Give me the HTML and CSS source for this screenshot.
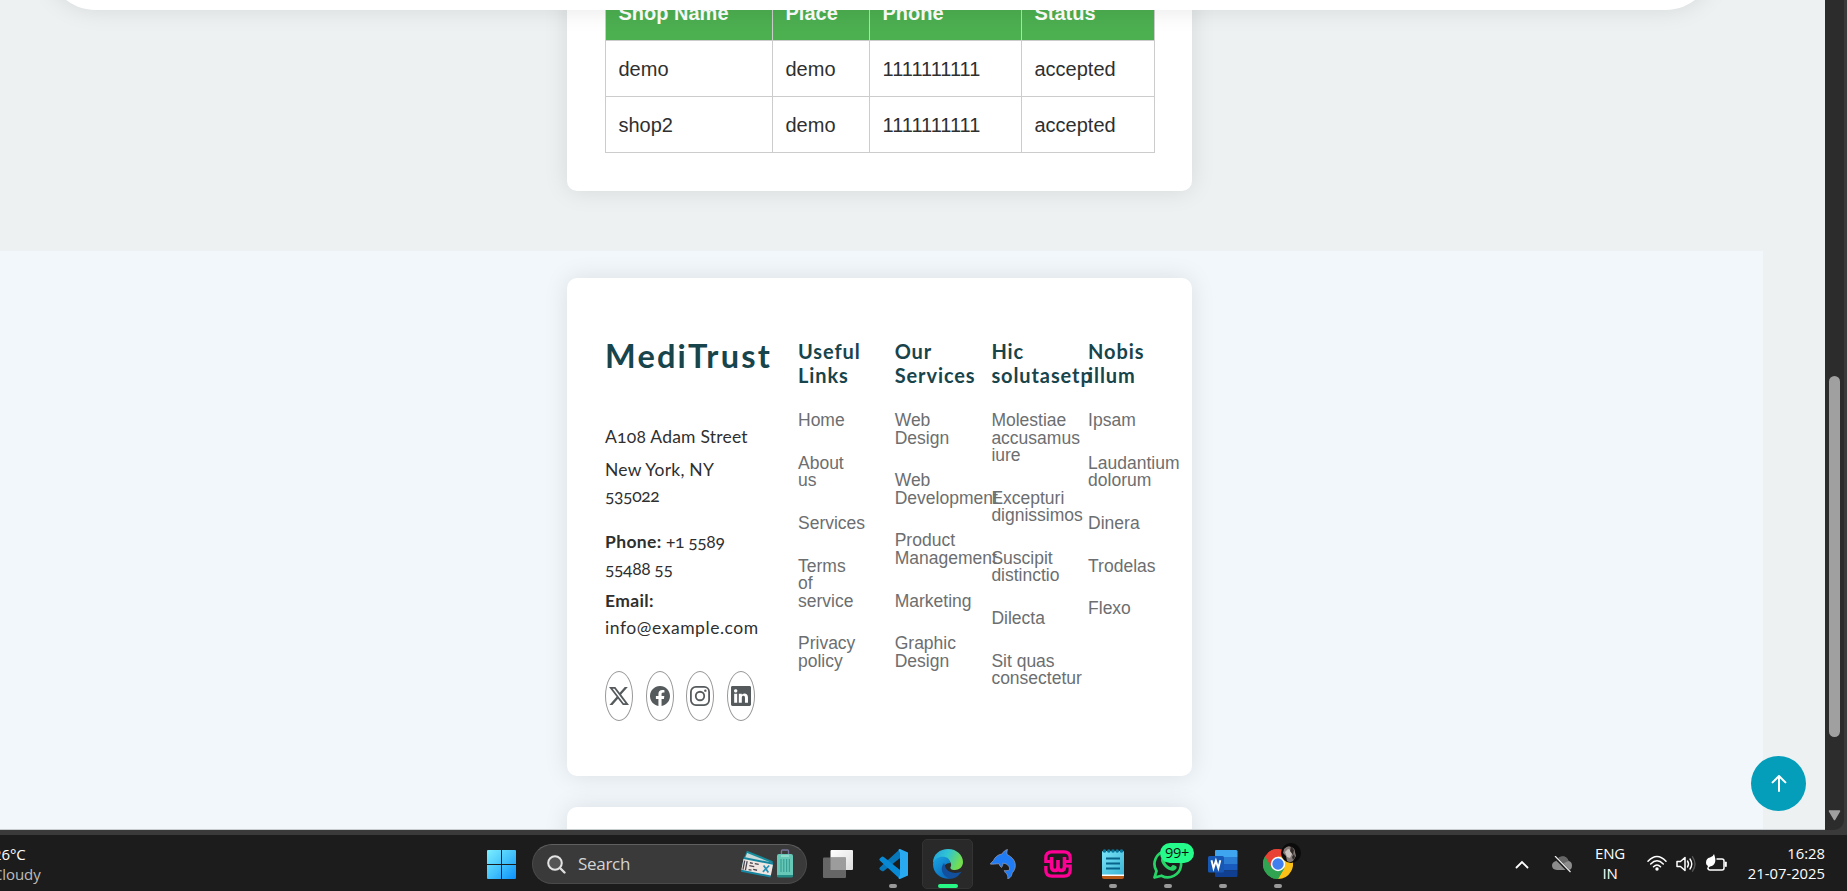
FILE: index.html
```html
<!DOCTYPE html>
<html lang="en">
<head>
<meta charset="utf-8">
<title>MediTrust</title>
<link rel="stylesheet" href="styles.css">
</head>
<body>
<div class="browser">
  <main class="page">
    <header class="navbar"></header>
    <section class="shops">
      <div class="card">
        <table class="shop-table">
          <thead><tr><th class="c-name">Shop Name</th><th class="c-place">Place</th><th class="c-phone">Phone</th><th class="c-status">Status</th></tr></thead>
          <tbody>
            <tr><td>demo</td><td>demo</td><td>1111111111</td><td>accepted</td></tr>
            <tr><td>shop2</td><td>demo</td><td>1111111111</td><td>accepted</td></tr>
          </tbody>
        </table>
      </div>
    </section>
    <footer class="footer">
      <div class="card footer-card">
        <div class="about">
          <div class="sitename">MediTrust</div>
          <div class="contact">
            <p class="street">A108 Adam Street</p>
            <p class="city">New York, NY<br><span class="digits">535022</span></p>
            <p class="phone"><strong>Phone:</strong> <span class="digits">+1 5589<br>55488 55</span></p>
            <p><strong>Email:</strong><br><span class="mail">info@example.com</span></p>
          </div>
          <div class="social">
            <a><svg viewBox="0 0 16 16"><path d="M12.6.75h2.454l-5.36 6.142L16 15.25h-4.937l-3.867-5.07-4.425 5.07H.316l5.733-6.57L0 .75h5.063l3.495 4.633L12.601.75Zm-.86 13.028h1.36L4.323 2.145H2.865z"/></svg></a>
            <a><svg viewBox="0 0 16 16"><path d="M16 8.049c0-4.446-3.582-8.05-8-8.05C3.58 0-.002 3.603-.002 8.05c0 4.017 2.926 7.347 6.75 7.951v-5.625h-2.03V8.05H6.75V6.275c0-2.017 1.195-3.131 3.022-3.131.876 0 1.791.157 1.791.157v1.98h-1.009c-.993 0-1.303.621-1.303 1.258v1.51h2.218l-.354 2.326H9.25V16c3.824-.604 6.75-3.934 6.75-7.951"/></svg></a>
            <a><svg viewBox="0 0 16 16"><rect x=".72" y=".72" width="14.56" height="14.56" rx="4" fill="none" stroke="currentColor" stroke-width="1.44"/><circle cx="8" cy="8" r="3.4" fill="none" stroke="currentColor" stroke-width="1.44"/><circle cx="12.27" cy="3.73" r=".96"/></svg></a>
            <a><svg viewBox="0 0 16 16"><path d="M0 1.146C0 .513.526 0 1.175 0h13.65C15.474 0 16 .513 16 1.146v13.708c0 .633-.526 1.146-1.175 1.146H1.175C.526 16 0 15.487 0 14.854zm4.943 12.248V6.169H2.542v7.225zm-1.2-8.212c.837 0 1.358-.554 1.358-1.248-.015-.709-.52-1.248-1.342-1.248S2.4 3.226 2.4 3.934c0 .694.521 1.248 1.327 1.248zm4.908 8.212V9.359c0-.216.016-.432.08-.586.173-.431.568-.878 1.232-.878.869 0 1.216.662 1.216 1.634v3.865h2.401V9.25c0-2.22-1.184-3.252-2.764-3.252-1.274 0-1.845.7-2.165 1.193v.025h-.016l.016-.025V6.169h-2.4c.03.678 0 7.225 0 7.225z"/></svg></a>
          </div>
        </div>
        <div class="links"><h4>Useful<br>Links</h4><ul><li>Home</li><li>About us</li><li>Services</li><li>Terms of service</li><li>Privacy policy</li></ul></div>
        <div class="links"><h4>Our<br>Services</h4><ul><li>Web Design</li><li>Web Development</li><li>Product Management</li><li>Marketing</li><li>Graphic Design</li></ul></div>
        <div class="links"><h4>Hic<br>solutasetp</h4><ul><li>Molestiae accusamus iure</li><li>Excepturi dignissimos</li><li>Suscipit distinctio</li><li>Dilecta</li><li>Sit quas consectetur</li></ul></div>
        <div class="links"><h4>Nobis<br>illum</h4><ul><li>Ipsam</li><li>Laudantium dolorum</li><li>Dinera</li><li>Trodelas</li><li>Flexo</li></ul></div>
      </div>
      <div class="card next-card"></div>
    </footer>
    <a class="scroll-top"><svg viewBox="0 0 16 18"><path d="M8 17V2M1.6 8.4 8 2l6.4 6.4" fill="none" stroke="#fff" stroke-width="2" stroke-linecap="round" stroke-linejoin="round"/></svg></a>
  </main>
  <div class="scrollbar"><div class="track"><div class="thumb"></div><svg class="down" viewBox="0 0 13 11"><path d="M1.5 1h10L6.5 9.500z" fill="#a0a0a0" stroke="#a0a0a0" stroke-width="1.500" stroke-linejoin="round"/></svg></div></div>
</div>
<div class="taskbar">
  <div class="weather"><div>26°C</div><div class="cond">Cloudy</div></div>
  <div class="apps">
    <svg class="start" viewBox="0 0 29 29"><defs><linearGradient id="win" x1="0" y1="0" x2="29" y2="29" gradientUnits="userSpaceOnUse"><stop offset="0" stop-color="#7ceefe"/><stop offset=".5" stop-color="#45c4fb"/><stop offset="1" stop-color="#0b8ffb"/></linearGradient></defs><path fill="url(#win)" d="M1 0h13v14H0V1q0-1 1-1zM15 0h13q1 0 1 1v13H15zM0 15h14v14H1q-1 0-1-1zM15 15h14v13q0 1-1 1H15z"/></svg>
    <div class="search">
      <svg class="lens" viewBox="0 0 19 19"><circle cx="8" cy="8" r="6.800" fill="#555" stroke="#e4e4e4" stroke-width="2"/><path d="m13 13 4.500 4.500" stroke="#ddd" stroke-width="2.400" stroke-linecap="round"/></svg>
      <span>Search</span>
      <svg class="travel" viewBox="0 0 54 30"><g transform="rotate(22 16 14)"><rect x="3" y="6" width="28" height="11" fill="#168c9c"/><rect x="4" y="8" width="26" height="6" fill="#c9dad9"/></g><g transform="rotate(11 16 19)"><rect x="2" y="10.500" width="30" height="15" fill="#1686a0"/><rect x="2" y="12.500" width="30" height="11" fill="#efe6e2"/><path d="M3.500 14v9M6 14v9M9 15h3M14 15h4M9 18h5M9 22h3M13.500 21h4" stroke="#4a4752" stroke-width="1.300"/><path d="m23 15 6 6M28.500 14l-5 7.500" stroke="#2791b5" stroke-width="1.700"/></g><path d="M41.500 6V2q0-1 1-1h5q1 0 1 1v4" fill="none" stroke="#77759d" stroke-width="1.300"/><rect x="37" y="5" width="16" height="23" rx="2" fill="#67c8b8"/><path d="M37 26h16v1q0 1.500-2 1.500H39q-2 0-2-1.500z" fill="#248c85"/><path d="M41 10v13M43.800 10v13M46.600 10v13M49.400 10v13" stroke="#399f94" stroke-width="1.200"/><path d="M41 7h8" stroke="#b8e9de"/></svg>
    </div>
    <div class="slots">
      <div class="slot"><svg viewBox="0 0 30 30"><defs><linearGradient id="tv" x1="0" y1="0" x2="1" y2="1"><stop offset="0" stop-color="#fff"/><stop offset="1" stop-color="#dcdcdc"/></linearGradient></defs><rect x="7.500" y="1" width="22.500" height="20" rx="1" fill="url(#tv)"/><rect x="0" y="8.500" width="23" height="20.500" rx="1" fill="#666"/><path d="M7.500 8.500H23V21H7.500z" fill="#9c9c9c"/></svg></div>
      <div class="slot running"><svg viewBox="0 0 30 30"><path d="M22 0 2 18.200q-1.500 1.300 0 2.600l1.800 1.300q1 .6 2-.2L22 9z" fill="#0877b9"/><path d="M22 30 2 11.800q-1.500-1.300 0-2.600l1.800-1.400q1-.5 2 .2L22 21z" fill="#0989d3"/><path d="M22 0 30 3.500v23L22 30q-1 .2-1.500-1l1.500-3V4l-1.500-3Q21-.3 22 0z" fill="#29a9f0"/></svg></div>
      <div class="slot active"><svg viewBox="0 0 30 30"><defs><linearGradient id="e1" x1="0" y1="0" x2="1" y2=".35"><stop offset="0" stop-color="#249ddd"/><stop offset=".5" stop-color="#30c5d4"/><stop offset="1" stop-color="#74de50"/></linearGradient><linearGradient id="e2" x1="0" y1="0" x2=".8" y2="1"><stop offset="0" stop-color="#1aa5e4"/><stop offset="1" stop-color="#0865b8"/></linearGradient></defs><path d="M0 14C0 5 7 0 15 0c9 0 15 6.500 15 13 0 5-4 8-8 8-4 0-5-1.500-4.500-3 1-1 1-4-1-6C12 8 3 9 0 14z" fill="url(#e1)"/><path d="M0 15C1 9 7 7 12 8c4 .8 5.500 4 5 6-5 0-7 4-6 8 1 5 7 8 9 7-9 3-20-3-20-14z" fill="url(#e2)"/><path d="M11 14c-5 6-1 15 8 15.500 4 0 8-4 9.500-7-6 3-14 1-16-4-.6-1.500-.4-3-1.500-4.500z" fill="#12509e"/></svg></div>
      <div class="slot"><svg viewBox="0 0 30 30"><path d="M2.200 15c1.500-1.500 2-2.500 3.300-3.500C7 8 10 5.500 14 5c1.500-2.500 3.200-4 5.500-4.500-.8 2-.8 3.500-.2 5.200 5 2.300 8 6 8 10.800 0 3-1 5-2.600 6.800-.8 1-.8 2.200-1.200 3.200-.6 1.500-1.800 2.600-3.800 3.300.2-1.800 0-3.300-.8-4.800-1.200-.8-2.300-2-2.700-3.500 2 .3 4 .2 5.300-.6.500-3-1.500-5.500-4.500-6.400l-2.200-.3c.2 1.600-.2 3-1.300 4.300-1.200-.8-2-2-2.300-3.700-3.300-.2-6 .8-9 .2z" fill="#207cf5" stroke="#9e9eb0" stroke-width=".7"/></svg></div>
      <div class="slot"><svg viewBox="0 0 30 30"><path d="M2.800 12.500V9q0-6.200 6.200-6.200h12q6.200 0 6.200 6.200v3.500H22M2.800 17v4q0 6.200 6.200 6.200h12q6.200 0 6.200-6.200v-4H22M1.200 12.500h6" fill="none" stroke="#ff0095" stroke-width="3.200"/><path d="M8.500 8v9.500q0 4 3.500 4 3 0 3-3.500V11v7q0 3.500 3.200 3.500 3.300 0 3.300-4V8" fill="none" stroke="#ff0095" stroke-width="3.600"/></svg></div>
      <div class="slot running"><svg viewBox="0 0 30 30"><defs><linearGradient id="np" x1="0" y1="0" x2="1" y2="1"><stop offset="0" stop-color="#79e4f8"/><stop offset="1" stop-color="#3cb5d5"/></linearGradient></defs><path d="M4 26h22v2q0 2-2 2H6q-2 0-2-2z" fill="#b85a18"/><path d="M4 24h22v3H4z" fill="#fff"/><path d="M5 2h20q1 0 1 1v22.500H4V3q0-1 1-1z" fill="url(#np)"/><path d="M8 9.500h14M8 14.500h14M8 19.500h14" stroke="#07638a" stroke-width="1.800"/><g fill="#087599"><circle cx="6.500" cy="2" r="1.800"/><circle cx="10.800" cy="2" r="1.800"/><circle cx="15" cy="2" r="1.800"/><circle cx="19.200" cy="2" r="1.800"/><circle cx="23.500" cy="2" r="1.800"/></g></svg></div>
      <div class="slot running"><svg viewBox="0 0 30 30"><path d="M1.500 28.500 3.500 22A13.300 13.300 0 1 1 8.500 26.700z" fill="none" stroke="#27d366" stroke-width="2.700" stroke-linejoin="round"/><path d="M8 11c0-2 1.500-4 3-4 1 0 1.200.5 2.500 4 0 1-1.500 2-1.200 2.600 1 2 3 3.500 5 4.500 1 .3 1.700-2 2.700-2 .7 0 3 1 3.600 1.600.4 2-1.600 4-4.600 4C14 21.500 8 15 8 11z" fill="#27d366"/></svg><span class="badge">99+</span></div>
      <div class="slot running"><svg viewBox="0 0 30 30"><path d="M8 1h20q1.500 0 1.500 1.500V8H7V2q0-1 1-1z" fill="#40a5ef"/><path d="M7 8h22.500v7H7z" fill="#2b7cd3"/><path d="M7 15h22.500v6.500H7z" fill="#185abd"/><path d="M7 21.500h22.500v5q0 1.500-1.500 1.500H8q-1 0-1-1z" fill="#103f91"/><rect x="0" y="7" width="16" height="16.500" rx="1.500" fill="#1757b4"/><path d="m3.500 11.200 2 8 2.400-7.500 2.400 7.500 2-8" fill="none" stroke="#fff" stroke-width="1.900"/></svg></div>
      <div class="slot running"><svg viewBox="0 0 30 30"><path d="M15 15 2 7.500A15 15 0 0 1 28 7.500z" fill="#e84235"/><path d="M15 15V7.500h13A15 15 0 0 1 15 30z" fill="#fbc116"/><path d="M2 7.500A15 15 0 0 0 15 30l6.500-11.200L15 15z" fill="#30a451"/><path d="M2 7.500A15 15 0 0 1 15 0v7.500l-6.500 11z" fill="#e84235"/><path d="M2 7.500 8.500 18.800 15 22.500l6.500-3.800L15 30A15 15 0 0 1 2 7.500z" fill="#30a451"/><circle cx="15" cy="15" r="7.200" fill="#fff"/><circle cx="15" cy="15" r="5.700" fill="#3f7fee"/></svg><svg class="avatar" viewBox="0 0 20 20"><circle cx="10" cy="10" r="10" fill="#0c0b0b"/><path d="M3 6q4-4 7-2 4 1 4 5l1 4-3 5q-3 2-6 0L5 13 2 10z" fill="#857b78"/><path d="M4 9l3-3 3 1 1 4-2 4-3-1z" fill="#c9c1bd"/><path d="M10 3l3 4-1 5-3-4zM11 14l2-3 1 3-2 3z" fill="#2f2a28"/></svg></div>
    </div>
  </div>
  <div class="tray">
    <svg class="chev" viewBox="0 0 14 9"><path d="m1.500 7.500 5.500-5.500 5.500 5.500" fill="none" stroke="#fff" stroke-width="1.800" stroke-linecap="round"/></svg>
    <svg class="cloud" viewBox="0 0 20 17"><path d="M5 14q-5-.3-5-4.500Q0 6 4 5q2-4.500 7-4.500 4 0 5.500 4.500 3.500.5 3.500 4.500Q20 14 16 14z" fill="#8c8c8c"/><path d="M4 5q2-4.500 7-4.500 4 0 5.500 4.500L10 8z" fill="#666"/><path d="m2.500.5 15 15.500" stroke="#1c1c1c" stroke-width="3"/><path d="m3 0 15.500 16" stroke="#eee" stroke-width="1.200"/></svg>
    <div class="lang"><div>ENG</div><div>IN</div></div>
    <svg class="wifi" viewBox="0 0 20 16"><g fill="none" stroke="#fff" stroke-width="1.500" stroke-linecap="round"><path d="M1 6.200q9-9.500 18 0M3.700 9q6.300-6.500 12.600 0M6.500 11.700q3.500-3.500 7 0"/></g><circle cx="10" cy="14" r="1.700" fill="#fff"/></svg>
    <svg class="vol" viewBox="0 0 21 18"><path d="M1 6.500h3.500L9 2.500v13l-4.500-4H1z" fill="none" stroke="#fff" stroke-width="1.500" stroke-linejoin="round"/><path d="M11.500 6q2 3 0 6M14 4q3.500 5 0 10" fill="none" stroke="#fff" stroke-width="1.400" stroke-linecap="round"/><path d="M16.500 1.800q5 7.200 0 14.400" fill="none" stroke="#555" stroke-width="1.400" stroke-linecap="round"/></svg>
    <svg class="batt" viewBox="0 0 21 18"><path d="M10.500 5H16q2 0 2 2v7q0 2-2 2H4q-2 0-2-2" fill="none" stroke="#fff" stroke-width="1.500"/><path d="M19 8h1.500v4.500H19z" fill="#fff" stroke="#fff" stroke-width=".6"/><path d="M0 9Q0 4 4 3.500 7 3 8 0q2 5 1 8.500-1.200 3.500-5 4L1 15l1-3Q0 11 0 9z" fill="#fff"/></svg>
    <div class="clock"><div>16:28</div><div>21-07-2025</div></div>
  </div>
</div>
</body>
</html>
```
FILE: styles.css
```css
* { box-sizing: border-box; }
body { margin: 0; width: 1847px; height: 891px; overflow: hidden; display: flex; flex-direction: column; font-family: "Liberation Sans", Arial, sans-serif; background: #1c1c1c; }
svg { display: block; }

.browser { height: 835px; padding-bottom: 5px; background: #3a3a3a; display: flex; }
.page { position: relative; width: 1825px; height: 830px; overflow: hidden; background: #edf1f2; border-bottom: 1px solid #c7cdcf; }
.navbar { position: absolute; z-index: 2; left: 46px; top: -110px; width: 1669px; height: 120px; border-radius: 50px; background: #fff; box-shadow: 0 0 25px rgba(0, 0, 0, .1); }
.card { width: 625px; background: #fff; border-radius: 10px; box-shadow: 0 0 25px rgba(0, 0, 0, .1); }

.shops { width: 1759px; height: 251px; padding-bottom: 60px; display: flex; flex-direction: column; justify-content: flex-end; align-items: center; }
.shops .card { flex: none; padding: 38px; }
.shop-table { width: 549px; border-collapse: collapse; table-layout: fixed; font-size: 20px; line-height: 30px; color: #2f2f2f; }
.shop-table th, .shop-table td { height: 56px; padding: 12.5px; text-align: left; border: 1px solid #ccc; }
.shop-table th { background: #4caf50; color: #fff; }
.c-name { width: 167px; }
.c-place { width: 97px; }
.c-phone { width: 152px; }
.c-status { width: 133px; }

.footer { width: 1763px; height: 579px; padding: 27px 4px 0 0; background: #f1f7fa; display: flex; flex-direction: column; align-items: center; gap: 31px; }
.footer-card { flex: none; height: 498px; padding: 61px 0 0 38px; display: flex; }
.next-card { flex: none; height: 60px; }
.about { width: 193px; margin-top: -3px; font-family: Lato, sans-serif; font-feature-settings: "onum"; white-space: nowrap; }
.sitename { font-size: 32.5px; line-height: 39px; font-weight: 700; letter-spacing: 2.200px; color: #18444c; }
.contact { padding-top: 49px; font-size: 17.5px; line-height: 26.600px; color: #2f2f2f; }
.contact p { margin: 0 0 6.25px; }
.contact .street, .contact .city { letter-spacing: .23px; }
.contact .digits { letter-spacing: -.400px; }
.contact strong { letter-spacing: .35px; }
.contact .mail { letter-spacing: .55px; }
.contact .phone { margin-top: 19px; }
.social { display: flex; gap: 12.5px; margin-top: 29px; }
.social a { width: 28.100px; height: 50px; border: 1px solid #999; border-radius: 50%; display: flex; align-items: center; justify-content: center; }
.social svg { flex: none; width: 20px; height: 20px; fill: #555a5c; color: #555a5c; }
.links { flex: none; width: 96.700px; padding-right: 32.500px; }
.links h4 { margin: 0 0 25px; font: 700 20px/24px Lato, sans-serif; letter-spacing: .9px; color: #18444c; }
.links ul { margin: 0; padding: 0; list-style: none; font-size: 17.5px; line-height: 17.5px; color: #6c6e70; }
.links li { margin-bottom: 25.200px; }

.scroll-top { position: absolute; left: 1751px; top: 756px; width: 55px; height: 55px; border-radius: 50%; background: #049ebb; display: flex; align-items: center; justify-content: center; }
.scroll-top svg { width: 16px; height: 18px; margin-top: -2px; }

.scrollbar { width: 22px; height: 830px; background: #3a3a3a; }
.track { width: 19px; height: 830px; background: #2c2c2c; border-bottom-right-radius: 10px; display: flex; flex-direction: column; align-items: center; padding-top: 376px; padding-right: 1px; }
.thumb { width: 11px; height: 361px; border-radius: 6px; background: #a0a0a0; }
.down { width: 13px; height: 11px; margin-top: 73px; }

.taskbar { height: 56px; background: #1c1c1c; display: flex; font-family: "Open Sans", "Noto Sans", sans-serif; color: #fff; font-size: 15px; line-height: 20px; }
.weather { width: 489px; margin-left: -7px; padding-top: 9px; letter-spacing: -.1px; }
.cond { color: #bdbdbd; }
.apps { display: flex; width: 1028px; height: 56px; align-items: center; margin-left: 5px; }
.start { width: 29px; height: 29px; margin-top: 3px; }
.search { width: 275px; height: 40px; margin: 2px 3px 0 16px; border-radius: 20px; border: 1px solid #4a4a4a; border-top-color: #606060; background: #3a3a3a; display: flex; align-items: center; padding: 0 12px 0 14px; font-size: 17px; letter-spacing: -.3px; color: #d4d4d4; }
.lens { width: 19px; height: 19px; margin-right: 12px; }
.travel { width: 54px; height: 30px; margin-left: auto; }
.slots { display: flex; }
.slot { position: relative; width: 55px; height: 56px; padding-top: 14px; display: flex; flex-direction: column; align-items: center; }
.slot > svg { width: 30px; height: 30px; flex: none; }
.slot.running::after { content: ""; width: 8px; height: 4px; border-radius: 2px; background: #999; margin-top: 5px; }
.slot.active { width: 51px; margin: 4px 2px 0; height: 50px; padding-top: 9px; background: #292929; border: 1px solid #333; border-radius: 5px; }
.slot.active::after { content: ""; width: 20px; height: 4px; border-radius: 2px; background: #27f785; margin-top: 5px; }
.badge { position: absolute; left: 20px; top: 8px; width: 34px; height: 20px; border-radius: 10px; background: #24fb8b; color: #111; font-size: 14.500px; line-height: 20px; letter-spacing: -.3px; text-align: center; }
.slot > .avatar { position: absolute; left: 31px; top: 8px; width: 20px; height: 20px; }

.tray { display: flex; width: 332px; height: 56px; padding-right: 22px; align-items: flex-start; }
.chev { width: 14px; height: 9px; margin-top: 25px; }
.cloud { width: 20px; height: 17px; margin: 21px 0 0 23px; }
.lang { width: 40px; margin: 8px 0 0 18px; text-align: center; letter-spacing: -.2px; }
.wifi { width: 20px; height: 16px; margin: 20px 0 0 17px; }
.vol { width: 21px; height: 18px; margin: 20px 0 0 9px; }
.batt { width: 21px; height: 18px; margin: 19px 0 0 9px; }
.clock { margin: 8px 0 0 auto; text-align: right; font-size: 14.800px; white-space: nowrap; }
```
